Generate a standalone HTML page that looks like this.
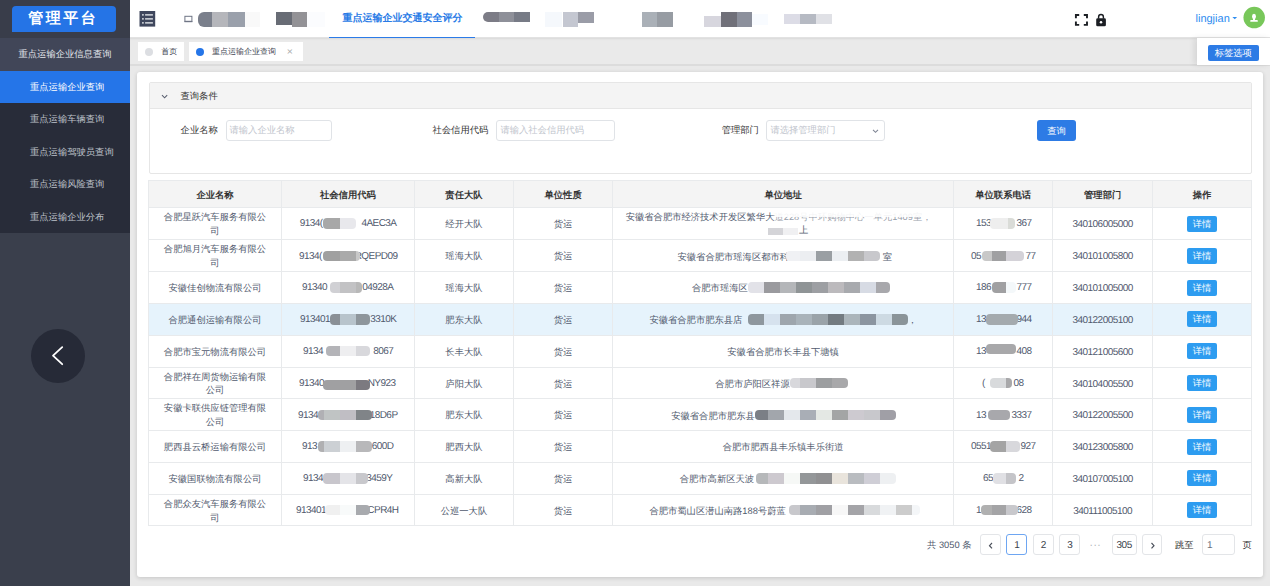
<!DOCTYPE html>
<html><head><meta charset="utf-8">
<style>
*{margin:0;padding:0;box-sizing:border-box}
html,body{text-rendering:geometricPrecision;width:1270px;height:586px;overflow:hidden;background:#e9e9e9;font-family:"Liberation Sans",sans-serif;color:#515a6e}
.abs{position:absolute}
#side{position:absolute;left:0;top:0;width:130px;height:586px;background:#3a3f4c}
#side .top{position:absolute;left:0;top:0;width:130px;height:38px;background:#393d4a}
#logo{position:absolute;left:11.7px;top:5.6px;width:104.5px;height:26px;background:#2574e6;border-radius:4px 4px 4px 0;color:#fff;font-size:15px;font-weight:bold;letter-spacing:2.5px;text-align:left;line-height:25.7px;padding-left:16.5px;white-space:nowrap}
.mi{position:absolute;left:0;width:130px;height:33px;line-height:33px;text-align:center;font-size:9.3px;color:#e6e8ee}
#hdr{position:absolute;left:130px;top:0;width:1140px;height:38px;background:#fff;border-bottom:1px solid #e2e2e2}
#tabs{position:absolute;left:130px;top:38px;width:1140px;height:28.3px;background:#eaeaea;border-bottom:2px solid #dcdcdc;box-shadow:inset 0 2px 2px -1px rgba(0,0,0,.08)}
.tab{position:absolute;white-space:nowrap;top:3.5px;height:19px;background:#fff;font-size:8px;line-height:19px;color:#3d4350}
.dot{position:absolute;top:6.4px;width:8px;height:8px;border-radius:50%}
#card{position:absolute;left:137px;top:71.5px;width:1126px;height:505px;background:#fff;border-radius:3px;box-shadow:0 1px 4px rgba(0,0,0,.16)}
#panel{position:absolute;left:148.5px;top:82px;width:1103.5px;height:91.5px;border:1px solid #e6e6e6;border-radius:2px}
#panel .ph{position:absolute;left:0;top:0;width:100%;height:25.5px;background:#f4f4f4;border-bottom:1px solid #e6e6e6;font-size:9.3px;line-height:26px;color:#333}
.lbl{position:absolute;font-size:9.3px;color:#333;line-height:21px;top:120px}
.inp{position:absolute;top:120px;height:21px;border:1px solid #e0e3e7;border-radius:3px;font-size:9.3px;line-height:19px;color:#c0c4cc;padding-left:3px;background:#fff}
.btn{position:absolute;background:#2d7be5;color:#fff;border-radius:3px;text-align:center}
table{position:absolute;left:148.5px;top:180.5px;border-collapse:collapse;table-layout:fixed;font-size:9.3px}
td,th{border:1px solid #e8eaec;text-align:center;color:#515a6e;font-weight:normal;line-height:12.6px;padding:0 9px}
th{height:27px;background:#f4f4f4;color:#333;font-weight:bold}
td{height:31.9px}
tr.hl td{background:#e6f3fc}
.det{position:relative;top:-1.5px;display:inline-block;width:29.5px;height:16px;line-height:16px;background:#2d9cf0;color:#fff;border-radius:2px;font-size:9.3px;vertical-align:middle}
.hl{height:1px;background:#e8eaec}
.vl{width:1px;background:#e8eaec}
.cell{position:absolute;display:flex;align-items:center;justify-content:center;text-align:center;font-size:9.3px;line-height:13.9px;padding-top:3px;color:#515a6e}
.th{font-weight:bold;color:#333;padding-top:4px}
.num{letter-spacing:-.55px;font-size:10px}
.tx{position:absolute;font-size:9.3px;line-height:12.6px;color:#515a6e;white-space:nowrap}
.bg{position:absolute;overflow:hidden}
.bg i{position:absolute;top:0;height:100%}
.blk{position:absolute}
.pg{position:absolute;top:534px;height:20.5px;border:1px solid #e3e5e8;border-radius:3px;font-size:10px;letter-spacing:-.5px;line-height:21px;text-align:center;color:#3a3f4a;background:#fff}
</style></head><body>
<div id="side">
  <div class="top"></div>
  <div id="logo">管理平台</div>
  <div class="mi" style="top:37.5px;background:#414658;height:33px">重点运输企业信息查询</div>
  <div class="abs" style="left:0;top:70.5px;width:130px;height:162px;background:#282c39"></div>
  <div class="mi" style="top:70.5px;background:#2575e8;height:32.3px;line-height:33px;color:#fff;text-align:left;padding-left:30px">重点运输企业查询</div>
  <div class="mi" style="top:103.3px;height:32.4px;line-height:33px;color:#bfc3cb;text-align:left;padding-left:30px">重点运输车辆查询</div>
  <div class="mi" style="top:135.7px;height:32.4px;line-height:33px;color:#bfc3cb;text-align:left;padding-left:30px">重点运输驾驶员查询</div>
  <div class="mi" style="top:168.1px;height:32.4px;line-height:33px;color:#bfc3cb;text-align:left;padding-left:30px">重点运输风险查询</div>
  <div class="mi" style="top:200.5px;height:32.4px;line-height:33px;color:#bfc3cb;text-align:left;padding-left:30px">重点运输企业分布</div>
  <div class="abs" style="left:31px;top:328.5px;width:54px;height:54px;border-radius:50%;background:#262a37"></div>
  <svg class="abs" style="left:0;top:0" width="130" height="586"><polyline points="62.2,347.2 53,355.7 62.2,364.2" fill="none" stroke="#fff" stroke-width="1.8" stroke-linecap="round" stroke-linejoin="round"/></svg>
</div>

<div id="hdr">
  <svg class="abs" style="left:0;top:0" width="1140" height="38">
    <rect x="9.5" y="11" width="15.7" height="15.6" fill="#3f475d"/>
    <g fill="#c2c6ce">
      <rect x="12" y="14" width="1.8" height="1.7"/><rect x="15.1" y="14" width="7.8" height="1.7"/>
      <rect x="12" y="18" width="1.8" height="1.7"/><rect x="15.1" y="18" width="7.8" height="1.7"/>
      <rect x="12" y="22" width="1.8" height="1.7"/><rect x="15.1" y="22" width="7.8" height="1.7"/>
    </g>
    <rect x="54.9" y="16.3" width="7" height="5" fill="none" stroke="#6f7585" stroke-width="1"/>
    <rect x="54.4" y="21" width="8" height="1.2" fill="#6f7585"/>
  </svg>
<div class="abs" style="left:67.7px;top:11.8px;width:14.3px;height:15.7px;background:#7a7f8b;border-radius:6px 0 0 6px;"></div>
<div class="abs" style="left:82.0px;top:11.8px;width:16.0px;height:15.7px;background:#b5b6bb;"></div>
<div class="abs" style="left:98.0px;top:11.8px;width:16.6px;height:15.7px;background:#9aa0ab;"></div>
<div class="abs" style="left:114.6px;top:11.8px;width:15.4px;height:15.7px;background:#f9f9f9;"></div>
<div class="abs" style="left:146.0px;top:12px;width:16.0px;height:12.5px;background:#686c75;"></div>
<div class="abs" style="left:162.0px;top:12px;width:15.0px;height:15.0px;background:#939296;"></div>
<div class="abs" style="left:177.0px;top:12px;width:18.0px;height:15.0px;background:#fbfcfe;"></div>
<div class="abs" style="left:353.4px;top:11.8px;width:15.3px;height:10.2px;background:#7c7c86;border-radius:6px 0 0 6px;"></div>
<div class="abs" style="left:368.7px;top:12px;width:15.3px;height:9.5px;background:#8e9099;"></div>
<div class="abs" style="left:384.0px;top:12px;width:16.0px;height:9.5px;background:#777b86;"></div>
<div class="abs" style="left:415.0px;top:12px;width:17.0px;height:15.0px;background:#f5f8fc;"></div>
<div class="abs" style="left:432.5px;top:12px;width:15.5px;height:15.0px;background:#c4c7d1;"></div>
<div class="abs" style="left:448.0px;top:12px;width:16.0px;height:10.5px;background:#9a9ca7;"></div>
<div class="abs" style="left:512.0px;top:12px;width:15.0px;height:15.0px;background:#aab0b7;"></div>
<div class="abs" style="left:527.0px;top:12px;width:16.0px;height:15.0px;background:#979ca3;"></div>
<div class="abs" style="left:574.0px;top:16px;width:17.0px;height:11.0px;background:#d7d6de;"></div>
<div class="abs" style="left:591.0px;top:12px;width:16.0px;height:15.0px;background:#707079;"></div>
<div class="abs" style="left:607.0px;top:12px;width:15.0px;height:15.0px;background:#8c909c;"></div>
<div class="abs" style="left:622.0px;top:14px;width:16.0px;height:11.0px;background:#f8fbff;"></div>
<div class="abs" style="left:654.0px;top:14px;width:16.0px;height:10.0px;background:#dcdce6;"></div>
<div class="abs" style="left:670.0px;top:14px;width:16.0px;height:10.0px;background:#b6bac3;"></div>
<div class="abs" style="left:686.0px;top:14px;width:16.0px;height:10.0px;background:#e0e1e6;"></div>
  <div class="abs" style="left:212.5px;top:10px;font-size:10px;font-weight:bold;color:#2a7be6;line-height:18px;white-space:nowrap">重点运输企业交通安全评分</div>
  <div class="abs" style="left:199px;top:36.5px;width:146px;height:1.5px;background:#2b7be8"></div>
  <svg class="abs" style="left:0;top:0" width="1140" height="38">
    <g stroke="#1c1f24" stroke-width="1.9" fill="none" stroke-linecap="butt">
      <path d="M945.9 18.3 V15 H949.2"/><path d="M953.8 15 H957 V18.3"/>
      <path d="M945.9 21.6 V24.9 H949.2"/><path d="M953.8 24.9 H957 V21.6"/>
    </g>
    <path d="M968.6 18.8 V17 A2.4 2.4 0 0 1 973.4 17 V18.8" fill="none" stroke="#1c1f24" stroke-width="1.45"/>
    <rect x="966.2" y="18.3" width="9.7" height="8" rx="1.4" fill="#1c1f24"/>
    <circle cx="971" cy="22.3" r="1.25" fill="#fff"/>
  </svg>
  <div class="abs" style="left:1065.5px;top:10.3px;font-size:11px;color:#2d8cf0;line-height:18px">lingjian</div>
  <svg class="abs" style="left:0;top:0" width="1140" height="38">
    <path d="M1102.4 16.9 H1107.1 L1104.75 19.3 Z" fill="#2d8cf0"/>
    <circle cx="1124.2" cy="17.55" r="10.75" fill="#78c75a"/>
    <ellipse cx="1124" cy="16.4" rx="2" ry="2.6" fill="#fff"/><rect x="1123" y="18" width="2" height="2.5" fill="#fff"/><path d="M1120.3 21.7 V20.6 Q1120.3 20 1121.2 20 H1126.8 Q1127.8 20 1127.8 20.6 V21.7 Z" fill="#fff"/>
  </svg>
</div>
<div id="tabs">
  <div class="tab" style="left:8px;width:46.4px"><div class="dot" style="left:7.2px;background:#dcdee2"></div><span class="abs" style="left:23.3px;top:.8px">首页</span></div>
  <div class="tab" style="left:59px;width:113.8px"><div class="dot" style="left:7.4px;background:#2575e8"></div><span class="abs" style="left:22.9px;top:.8px">重点运输企业查询</span><span class="abs" style="left:97.7px;top:1px;color:#aaa;font-size:10.5px">×</span></div>
  <div class="abs" style="left:1067px;top:0;width:73px;height:26.5px;background:#fff;box-shadow:-3px 0 6px rgba(0,0,0,.09)"></div>
  <div class="btn" style="left:1078px;top:6.6px;width:50.5px;height:16px;font-size:9.3px;line-height:16px;border-radius:2px">标签选项</div>
</div>

<div id="card"></div>
<div id="panel"><div class="ph"><svg class="abs" style="left:11px;top:10.5px" width="8" height="6"><polyline points="1,1.2 3.6,3.8 6.2,1.2" fill="none" stroke="#5a6070" stroke-width="1.1"/></svg><span class="abs" style="left:31px;top:0;font-size:9.3px">查询条件</span></div></div>
<div class="lbl" style="left:180.6px">企业名称</div>
<div class="inp" style="left:225.5px;width:106.3px">请输入企业名称</div>
<div class="lbl" style="left:432.5px">社会信用代码</div>
<div class="inp" style="left:496.4px;width:119.1px">请输入社会信用代码</div>
<div class="lbl" style="left:721.7px">管理部门</div>
<div class="inp" style="left:766.4px;width:118.9px">请选择管理部门<svg class="abs" style="left:105px;top:8px" width="8" height="5"><polyline points="1,0.8 3.5,3.3 6,0.8" fill="none" stroke="#808695" stroke-width="1.1"/></svg></div>
<div class="btn" style="left:1036.7px;top:120.2px;width:39.8px;height:21.3px;font-size:9.3px;line-height:23px">查询</div>
<!--TABLE-->
<div class="abs" style="left:148.7px;top:180.8px;width:1103.0px;height:26.6px;background:#f4f4f4"></div>
<div class="abs" style="left:148.7px;top:303.50px;width:1103.0px;height:31.80px;background:#e6f3fc"></div>
<div class="abs hl" style="left:148.7px;top:180.30px;width:1103.5px"></div>
<div class="abs hl" style="left:148.7px;top:206.90px;width:1103.5px"></div>
<div class="abs hl" style="left:148.7px;top:239.40px;width:1103.5px"></div>
<div class="abs hl" style="left:148.7px;top:271.20px;width:1103.5px"></div>
<div class="abs hl" style="left:148.7px;top:303.00px;width:1103.5px"></div>
<div class="abs hl" style="left:148.7px;top:334.80px;width:1103.5px"></div>
<div class="abs hl" style="left:148.7px;top:366.60px;width:1103.5px"></div>
<div class="abs hl" style="left:148.7px;top:398.40px;width:1103.5px"></div>
<div class="abs hl" style="left:148.7px;top:430.20px;width:1103.5px"></div>
<div class="abs hl" style="left:148.7px;top:461.90px;width:1103.5px"></div>
<div class="abs hl" style="left:148.7px;top:493.70px;width:1103.5px"></div>
<div class="abs hl" style="left:148.7px;top:525.40px;width:1103.5px"></div>
<div class="abs vl" style="left:148.2px;top:180.3px;height:346.1px"></div>
<div class="abs vl" style="left:280.8px;top:180.3px;height:346.1px"></div>
<div class="abs vl" style="left:414.0px;top:180.3px;height:346.1px"></div>
<div class="abs vl" style="left:512.9px;top:180.3px;height:346.1px"></div>
<div class="abs vl" style="left:612.3px;top:180.3px;height:346.1px"></div>
<div class="abs vl" style="left:952.9px;top:180.3px;height:346.1px"></div>
<div class="abs vl" style="left:1052.4px;top:180.3px;height:346.1px"></div>
<div class="abs vl" style="left:1151.9px;top:180.3px;height:346.1px"></div>
<div class="abs vl" style="left:1251.2px;top:180.3px;height:346.1px"></div>
<div class="cell th" style="left:148.7px;top:180.8px;width:132.6px;height:26.6px">企业名称</div>
<div class="cell th" style="left:281.3px;top:180.8px;width:133.2px;height:26.6px">社会信用代码</div>
<div class="cell th" style="left:414.5px;top:180.8px;width:98.9px;height:26.6px">责任大队</div>
<div class="cell th" style="left:513.4px;top:180.8px;width:99.4px;height:26.6px">单位性质</div>
<div class="cell th" style="left:612.8px;top:180.8px;width:340.6px;height:26.6px">单位地址</div>
<div class="cell th" style="left:953.4px;top:180.8px;width:99.5px;height:26.6px">单位联系电话</div>
<div class="cell th" style="left:1052.9px;top:180.8px;width:99.5px;height:26.6px">管理部门</div>
<div class="cell th" style="left:1152.4px;top:180.8px;width:99.3px;height:26.6px">操作</div>
<div class="cell td" style="left:148.7px;top:207.40px;width:132.6px;height:32.50px">合肥星跃汽车服务有限公<br>司</div>
<div class="cell td" style="left:414.5px;top:207.40px;width:98.9px;height:32.50px">经开大队</div>
<div class="cell td" style="left:513.4px;top:207.40px;width:99.4px;height:32.50px">货运</div>
<div class="cell td" style="left:1052.9px;top:207.40px;width:99.5px;height:32.50px"><span class="num">340106005000</span></div>
<div class="cell td" style="left:1152.4px;top:207.40px;width:99.3px;height:32.50px"><span class="det">详情</span></div>
<div class="cell td" style="left:148.7px;top:239.90px;width:132.6px;height:31.80px">合肥旭月汽车服务有限公<br>司</div>
<div class="cell td" style="left:414.5px;top:239.90px;width:98.9px;height:31.80px">瑶海大队</div>
<div class="cell td" style="left:513.4px;top:239.90px;width:99.4px;height:31.80px">货运</div>
<div class="cell td" style="left:1052.9px;top:239.90px;width:99.5px;height:31.80px"><span class="num">340101005800</span></div>
<div class="cell td" style="left:1152.4px;top:239.90px;width:99.3px;height:31.80px"><span class="det">详情</span></div>
<div class="cell td" style="left:148.7px;top:271.70px;width:132.6px;height:31.80px">安徽佳创物流有限公司</div>
<div class="cell td" style="left:414.5px;top:271.70px;width:98.9px;height:31.80px">瑶海大队</div>
<div class="cell td" style="left:513.4px;top:271.70px;width:99.4px;height:31.80px">货运</div>
<div class="cell td" style="left:1052.9px;top:271.70px;width:99.5px;height:31.80px"><span class="num">340101005000</span></div>
<div class="cell td" style="left:1152.4px;top:271.70px;width:99.3px;height:31.80px"><span class="det">详情</span></div>
<div class="cell td" style="left:148.7px;top:303.50px;width:132.6px;height:31.80px">合肥通创运输有限公司</div>
<div class="cell td" style="left:414.5px;top:303.50px;width:98.9px;height:31.80px">肥东大队</div>
<div class="cell td" style="left:513.4px;top:303.50px;width:99.4px;height:31.80px">货运</div>
<div class="cell td" style="left:1052.9px;top:303.50px;width:99.5px;height:31.80px"><span class="num">340122005100</span></div>
<div class="cell td" style="left:1152.4px;top:303.50px;width:99.3px;height:31.80px"><span class="det">详情</span></div>
<div class="cell td" style="left:148.7px;top:335.30px;width:132.6px;height:31.80px">合肥市宝元物流有限公司</div>
<div class="cell td" style="left:414.5px;top:335.30px;width:98.9px;height:31.80px">长丰大队</div>
<div class="cell td" style="left:513.4px;top:335.30px;width:99.4px;height:31.80px">货运</div>
<div class="cell td" style="left:1052.9px;top:335.30px;width:99.5px;height:31.80px"><span class="num">340121005600</span></div>
<div class="cell td" style="left:1152.4px;top:335.30px;width:99.3px;height:31.80px"><span class="det">详情</span></div>
<div class="cell td" style="left:612.8px;top:335.30px;width:340.6px;height:31.80px">安徽省合肥市长丰县下塘镇</div>
<div class="cell td" style="left:148.7px;top:367.10px;width:132.6px;height:31.80px">合肥祥在周货物运输有限<br>公司</div>
<div class="cell td" style="left:414.5px;top:367.10px;width:98.9px;height:31.80px">庐阳大队</div>
<div class="cell td" style="left:513.4px;top:367.10px;width:99.4px;height:31.80px">货运</div>
<div class="cell td" style="left:1052.9px;top:367.10px;width:99.5px;height:31.80px"><span class="num">340104005500</span></div>
<div class="cell td" style="left:1152.4px;top:367.10px;width:99.3px;height:31.80px"><span class="det">详情</span></div>
<div class="cell td" style="left:148.7px;top:398.90px;width:132.6px;height:31.80px">安徽卡联供应链管理有限<br>公司</div>
<div class="cell td" style="left:414.5px;top:398.90px;width:98.9px;height:31.80px">肥东大队</div>
<div class="cell td" style="left:513.4px;top:398.90px;width:99.4px;height:31.80px">货运</div>
<div class="cell td" style="left:1052.9px;top:398.90px;width:99.5px;height:31.80px"><span class="num">340122005500</span></div>
<div class="cell td" style="left:1152.4px;top:398.90px;width:99.3px;height:31.80px"><span class="det">详情</span></div>
<div class="cell td" style="left:148.7px;top:430.70px;width:132.6px;height:31.70px">肥西县云桥运输有限公司</div>
<div class="cell td" style="left:414.5px;top:430.70px;width:98.9px;height:31.70px">肥西大队</div>
<div class="cell td" style="left:513.4px;top:430.70px;width:99.4px;height:31.70px">货运</div>
<div class="cell td" style="left:1052.9px;top:430.70px;width:99.5px;height:31.70px"><span class="num">340123005800</span></div>
<div class="cell td" style="left:1152.4px;top:430.70px;width:99.3px;height:31.70px"><span class="det">详情</span></div>
<div class="cell td" style="left:612.8px;top:430.70px;width:340.6px;height:31.70px">合肥市肥西县丰乐镇丰乐街道</div>
<div class="cell td" style="left:148.7px;top:462.40px;width:132.6px;height:31.80px">安徽国联物流有限公司</div>
<div class="cell td" style="left:414.5px;top:462.40px;width:98.9px;height:31.80px">高新大队</div>
<div class="cell td" style="left:513.4px;top:462.40px;width:99.4px;height:31.80px">货运</div>
<div class="cell td" style="left:1052.9px;top:462.40px;width:99.5px;height:31.80px"><span class="num">340107005100</span></div>
<div class="cell td" style="left:1152.4px;top:462.40px;width:99.3px;height:31.80px"><span class="det">详情</span></div>
<div class="cell td" style="left:148.7px;top:494.20px;width:132.6px;height:31.70px">合肥众友汽车服务有限公<br>司</div>
<div class="cell td" style="left:414.5px;top:494.20px;width:98.9px;height:31.70px">公巡一大队</div>
<div class="cell td" style="left:513.4px;top:494.20px;width:99.4px;height:31.70px">货运</div>
<div class="cell td" style="left:1052.9px;top:494.20px;width:99.5px;height:31.70px"><span class="num">340111005100</span></div>
<div class="cell td" style="left:1152.4px;top:494.20px;width:99.3px;height:31.70px"><span class="det">详情</span></div>
<!--/TABLE-->







<!--BLK-->
<div class="tx" style="letter-spacing:-0.55px;font-size:10px;left:299.8px;top:218.35px">9134(</div>
<div class="tx" style="letter-spacing:-0.55px;font-size:10px;right:873.5px;top:218.35px">4AEC3A</div>
<div class="bg" style="left:323.0px;top:218.40px;width:33.0px;height:10.5px;border-radius:4px"><i style="left:0.0px;width:17.0px;background:#a8a8a8"></i><i style="left:17.0px;width:16.0px;background:#e8e8ec"></i></div>
<div class="tx" style="letter-spacing:-0.55px;font-size:10px;left:299.0px;top:250.50px">9134(</div>
<div class="tx" style="letter-spacing:-0.55px;font-size:10px;right:872.5px;top:250.50px">RQEPD09</div>
<div class="bg" style="left:323.0px;top:250.55px;width:37.0px;height:10.5px;border-radius:4px"><i style="left:0.0px;width:17.0px;background:#a0a0a0"></i><i style="left:17.0px;width:16.0px;background:#aaaaaa"></i><i style="left:33.0px;width:4.0px;background:#c8c8c8"></i></div>
<div class="tx" style="letter-spacing:-0.55px;font-size:10px;left:302.0px;top:282.30px">91340</div>
<div class="tx" style="letter-spacing:-0.55px;font-size:10px;right:876.5px;top:282.30px">04928A</div>
<div class="bg" style="left:330.0px;top:282.35px;width:32.0px;height:10.5px;border-radius:4px"><i style="left:0.0px;width:10.0px;background:#d0d0d4"></i><i style="left:10.0px;width:16.0px;background:#c2c2c4"></i><i style="left:26.0px;width:6.0px;background:#b8b8b8"></i></div>
<div class="tx" style="letter-spacing:-0.55px;font-size:10px;left:300.0px;top:314.10px">913401</div>
<div class="tx" style="letter-spacing:-0.55px;font-size:10px;right:873.5px;top:314.10px">3310K</div>
<div class="bg" style="left:330.0px;top:314.15px;width:40.0px;height:10.5px;border-radius:4px"><i style="left:0.0px;width:10.0px;background:#8a9096"></i><i style="left:10.0px;width:16.0px;background:#b8c4cc"></i><i style="left:26.0px;width:14.0px;background:#8e969c"></i></div>
<div class="tx" style="letter-spacing:-0.55px;font-size:10px;left:303.0px;top:345.90px">9134</div>
<div class="tx" style="letter-spacing:-0.55px;font-size:10px;right:876.8px;top:345.90px">8067</div>
<div class="bg" style="left:326.0px;top:345.95px;width:44.0px;height:10.5px;border-radius:4px"><i style="left:0.0px;width:14.0px;background:#b4b4b8"></i><i style="left:14.0px;width:16.0px;background:#eeeef0"></i><i style="left:30.0px;width:14.0px;background:#d8d8dc"></i></div>
<div class="tx" style="letter-spacing:-0.55px;font-size:10px;left:299.0px;top:377.70px">91340</div>
<div class="tx" style="letter-spacing:-0.55px;font-size:10px;right:874.5px;top:377.70px">NY923</div>
<div class="bg" style="left:323.0px;top:379.75px;width:47.0px;height:10.5px;border-radius:4px"><i style="left:0.0px;width:33.0px;background:#a0a0a2"></i><i style="left:33.0px;width:14.0px;background:#7c7a80"></i></div>
<div class="tx" style="letter-spacing:-0.55px;font-size:10px;left:298.0px;top:409.50px">9134</div>
<div class="tx" style="letter-spacing:-0.55px;font-size:10px;right:872.5px;top:409.50px">18D6P</div>
<div class="bg" style="left:318.0px;top:409.55px;width:54.0px;height:10.5px;border-radius:4px"><i style="left:0.0px;width:6.0px;background:#b0b0b4"></i><i style="left:6.0px;width:16.0px;background:#c0c4c4"></i><i style="left:22.0px;width:16.0px;background:#c0bec4"></i><i style="left:38.0px;width:16.0px;background:#808488"></i></div>
<div class="tx" style="letter-spacing:-0.55px;font-size:10px;left:302.0px;top:441.25px">913</div>
<div class="tx" style="letter-spacing:-0.55px;font-size:10px;right:876.5px;top:441.25px">600D</div>
<div class="bg" style="left:318.0px;top:441.30px;width:54.0px;height:10.5px;border-radius:4px"><i style="left:0.0px;width:6.0px;background:#b0b0b2"></i><i style="left:6.0px;width:16.0px;background:#ccd0d4"></i><i style="left:22.0px;width:16.0px;background:#eef0f2"></i><i style="left:38.0px;width:16.0px;background:#b8b8ba"></i></div>
<div class="tx" style="letter-spacing:-0.55px;font-size:10px;left:303.0px;top:473.00px">9134</div>
<div class="tx" style="letter-spacing:-0.55px;font-size:10px;right:877.5px;top:473.00px">3459Y</div>
<div class="bg" style="left:323.0px;top:473.05px;width:45.0px;height:10.5px;border-radius:4px"><i style="left:0.0px;width:17.0px;background:#c8c6cc"></i><i style="left:17.0px;width:16.0px;background:#e4e4e8"></i><i style="left:33.0px;width:12.0px;background:#c8c8cc"></i></div>
<div class="tx" style="letter-spacing:-0.55px;font-size:10px;left:296.0px;top:504.75px">913401</div>
<div class="tx" style="letter-spacing:-0.55px;font-size:10px;right:871.5px;top:504.75px">CPR4H</div>
<div class="bg" style="left:325.0px;top:504.80px;width:45.0px;height:10.5px;border-radius:4px"><i style="left:0.0px;width:15.0px;background:#f0f0f0"></i><i style="left:15.0px;width:16.0px;background:#f8fafa"></i><i style="left:31.0px;width:14.0px;background:#a8aaae"></i></div>
<div class="tx" style="letter-spacing:-0.55px;font-size:10px;left:976.0px;top:218.35px">153</div>
<div class="tx" style="letter-spacing:-0.55px;font-size:10px;right:238.5px;top:218.35px">367</div>
<div class="bg" style="left:990.0px;top:218.40px;width:25.0px;height:10.5px;border-radius:4px"><i style="left:0.0px;width:18.0px;background:#eeeeee"></i><i style="left:18.0px;width:7.0px;background:#dadcd8"></i></div>
<div class="tx" style="letter-spacing:-0.55px;font-size:10px;left:971.0px;top:250.50px">05</div>
<div class="tx" style="letter-spacing:-0.55px;font-size:10px;right:234.5px;top:250.50px">77</div>
<div class="bg" style="left:982.0px;top:250.55px;width:42.0px;height:10.5px;border-radius:4px"><i style="left:0.0px;width:10.0px;background:#c8c8c8"></i><i style="left:10.0px;width:14.0px;background:#a0a0a2"></i><i style="left:24.0px;width:18.0px;background:#d4d2d8"></i></div>
<div class="tx" style="letter-spacing:-0.55px;font-size:10px;left:976.0px;top:282.30px">186</div>
<div class="tx" style="letter-spacing:-0.55px;font-size:10px;right:238.5px;top:282.30px">777</div>
<div class="bg" style="left:992.0px;top:282.35px;width:24.0px;height:10.5px;border-radius:4px"><i style="left:0.0px;width:14.0px;background:#a0a0a2"></i><i style="left:14.0px;width:10.0px;background:#f4f8fa"></i></div>
<div class="tx" style="letter-spacing:-0.55px;font-size:10px;left:976.0px;top:314.10px">13</div>
<div class="tx" style="letter-spacing:-0.55px;font-size:10px;right:238.5px;top:314.10px">944</div>
<div class="bg" style="left:986.0px;top:314.15px;width:32.0px;height:10.5px;border-radius:4px"><i style="left:0.0px;width:32.0px;background:#a4aaae"></i></div>
<div class="tx" style="letter-spacing:-0.55px;font-size:10px;left:976.0px;top:345.90px">13</div>
<div class="tx" style="letter-spacing:-0.55px;font-size:10px;right:238.5px;top:345.90px">408</div>
<div class="bg" style="left:986.0px;top:343.95px;width:30.0px;height:10.5px;border-radius:4px"><i style="left:0.0px;width:30.0px;background:#a8a8aa"></i></div>
<div class="tx" style="letter-spacing:-0.55px;font-size:10px;left:982.0px;top:377.70px">(</div>
<div class="tx" style="letter-spacing:-0.55px;font-size:10px;right:246.5px;top:377.70px">08</div>
<div class="bg" style="left:990.0px;top:377.75px;width:22.0px;height:10.5px;border-radius:4px"><i style="left:0.0px;width:16.0px;background:#d8dadc"></i><i style="left:16.0px;width:6.0px;background:#a8a8aa"></i></div>
<div class="tx" style="letter-spacing:-0.55px;font-size:10px;left:976.0px;top:409.50px">13</div>
<div class="tx" style="letter-spacing:-0.55px;font-size:10px;right:238.5px;top:409.50px">3337</div>
<div class="bg" style="left:988.0px;top:409.55px;width:22.0px;height:10.5px;border-radius:4px"><i style="left:0.0px;width:22.0px;background:#a8a8ac"></i></div>
<div class="tx" style="letter-spacing:-0.55px;font-size:10px;left:971.0px;top:441.25px">0551</div>
<div class="tx" style="letter-spacing:-0.55px;font-size:10px;right:234.5px;top:441.25px">927</div>
<div class="bg" style="left:990.0px;top:441.30px;width:30.0px;height:10.5px;border-radius:4px"><i style="left:0.0px;width:16.0px;background:#a4a4a4"></i><i style="left:16.0px;width:14.0px;background:#d8d8dc"></i></div>
<div class="tx" style="letter-spacing:-0.55px;font-size:10px;left:983.0px;top:473.00px">65</div>
<div class="tx" style="letter-spacing:-0.55px;font-size:10px;right:246.5px;top:473.00px">2</div>
<div class="bg" style="left:993.0px;top:473.05px;width:23.0px;height:10.5px;border-radius:4px"><i style="left:0.0px;width:13.0px;background:#e0e0e4"></i><i style="left:13.0px;width:10.0px;background:#c4c4c8"></i></div>
<div class="tx" style="letter-spacing:-0.55px;font-size:10px;left:976.0px;top:504.75px">1</div>
<div class="tx" style="letter-spacing:-0.55px;font-size:10px;right:238.5px;top:504.75px">628</div>
<div class="bg" style="left:981.0px;top:504.80px;width:37.0px;height:10.5px;border-radius:4px"><i style="left:0.0px;width:11.0px;background:#b0b0b0"></i><i style="left:11.0px;width:14.0px;background:#a4a4a6"></i><i style="left:25.0px;width:12.0px;background:#c8c8cc"></i></div>
<div class="tx" style="left:625.7px;top:211.05px">安徽省合肥市经济技术开发区繁华大道228号中环购物中心一单元1409室，</div>
<div class="abs" style="left:774.7px;top:210.65px;width:170px;height:6px;background:rgba(255,255,255,.93)"></div>
<div class="abs" style="left:774.7px;top:216.65px;width:170px;height:6px;background:rgba(255,255,255,.4)"></div>
<div class="bg" style="left:768.0px;top:227.60px;width:30.0px;height:7.5px;border-radius:0px"><i style="left:0.0px;width:15.3px;background:#d4d4d8"></i><i style="left:15.3px;width:14.7px;background:#f0f0f2"></i></div>
<div class="tx" style="left:799px;top:223.95px">上</div>
<div class="tx" style="left:677.5px;top:250.50px">安徽省合肥市瑶海区都市科</div>
<div class="tx" style="right:378.0px;top:250.50px">室</div>
<div class="bg" style="left:786.0px;top:250.55px;width:94.0px;height:10.5px;border-radius:4px"><i style="left:0.0px;width:14.0px;background:#f0f1f4"></i><i style="left:14.0px;width:16.0px;background:#eceef1"></i><i style="left:30.0px;width:16.0px;background:#9a9fa3"></i><i style="left:46.0px;width:16.0px;background:#eceff2"></i><i style="left:62.0px;width:16.0px;background:#b2b2b2"></i><i style="left:78.0px;width:16.0px;background:#c8c8cc"></i></div>
<div class="tx" style="left:692.0px;top:282.30px">合肥市瑶海区</div>
<div class="bg" style="left:748.0px;top:282.35px;width:142.0px;height:10.5px;border-radius:4px"><i style="left:0.0px;width:16.0px;background:#e2e2e8"></i><i style="left:16.0px;width:16.0px;background:#9a9a9e"></i><i style="left:32.0px;width:16.0px;background:#b4b6b9"></i><i style="left:48.0px;width:16.0px;background:#8f9496"></i><i style="left:64.0px;width:16.0px;background:#9d9fa3"></i><i style="left:80.0px;width:16.0px;background:#bcbabd"></i><i style="left:96.0px;width:16.0px;background:#a8aaae"></i><i style="left:112.0px;width:16.0px;background:#d7dbe4"></i><i style="left:128.0px;width:14.0px;background:#a8a8ac"></i></div>
<div class="tx" style="left:649.4px;top:314.10px">安徽省合肥市肥东县店</div>
<div class="tx" style="right:353.0px;top:314.10px">，</div>
<div class="bg" style="left:748.0px;top:314.15px;width:160.0px;height:10.5px;border-radius:4px"><i style="left:0.0px;width:16.0px;background:#8e979e"></i><i style="left:16.0px;width:16.0px;background:#d6e2ee"></i><i style="left:32.0px;width:16.0px;background:#9ea6ad"></i><i style="left:48.0px;width:16.0px;background:#a9b3ba"></i><i style="left:64.0px;width:16.0px;background:#9aa3a9"></i><i style="left:80.0px;width:16.0px;background:#737b81"></i><i style="left:96.0px;width:16.0px;background:#abb5bb"></i><i style="left:112.0px;width:16.0px;background:#8b95a0"></i><i style="left:128.0px;width:16.0px;background:#cddae3"></i><i style="left:144.0px;width:16.0px;background:#8a9499"></i></div>
<div class="tx" style="left:715.3px;top:377.70px">合肥市庐阳区祥源</div>
<div class="bg" style="left:790.0px;top:377.75px;width:58.0px;height:10.5px;border-radius:4px"><i style="left:0.0px;width:10.0px;background:#d8d8dc"></i><i style="left:10.0px;width:16.0px;background:#c8c8cc"></i><i style="left:26.0px;width:16.0px;background:#9c9ea0"></i><i style="left:42.0px;width:16.0px;background:#a8a8aa"></i></div>
<div class="tx" style="left:671.2px;top:409.50px">安徽省合肥市肥东县</div>
<div class="bg" style="left:755.0px;top:409.55px;width:141.0px;height:10.5px;border-radius:4px"><i style="left:0.0px;width:13.0px;background:#7b7f86"></i><i style="left:13.0px;width:16.0px;background:#a2a6ac"></i><i style="left:29.0px;width:16.0px;background:#e4e8ec"></i><i style="left:45.0px;width:16.0px;background:#a9aeb6"></i><i style="left:61.0px;width:16.0px;background:#e4e8e4"></i><i style="left:77.0px;width:16.0px;background:#a3a5a5"></i><i style="left:93.0px;width:16.0px;background:#cdcad0"></i><i style="left:109.0px;width:16.0px;background:#c8c8cc"></i><i style="left:125.0px;width:16.0px;background:#a09fa6"></i></div>
<div class="tx" style="left:679.7px;top:473.00px">合肥市高新区天波</div>
<div class="bg" style="left:756.0px;top:473.05px;width:140.0px;height:10.5px;border-radius:4px"><i style="left:0.0px;width:12.0px;background:#b6b8ba"></i><i style="left:12.0px;width:16.0px;background:#cdc9cf"></i><i style="left:28.0px;width:16.0px;background:#f6f8f6"></i><i style="left:44.0px;width:16.0px;background:#949799"></i><i style="left:60.0px;width:16.0px;background:#909092"></i><i style="left:76.0px;width:16.0px;background:#e9e4dc"></i><i style="left:92.0px;width:16.0px;background:#b9bcc0"></i><i style="left:108.0px;width:16.0px;background:#cfced6"></i><i style="left:124.0px;width:16.0px;background:#eef0f2"></i></div>
<div class="tx" style="left:649.4px;top:504.75px">合肥市蜀山区潜山南路188号蔚蓝</div>
<div class="bg" style="left:789.0px;top:504.80px;width:131.0px;height:10.5px;border-radius:4px"><i style="left:0.0px;width:11.0px;background:#c8c8cc"></i><i style="left:11.0px;width:16.0px;background:#a8acb2"></i><i style="left:27.0px;width:16.0px;background:#a0a0a4"></i><i style="left:43.0px;width:16.0px;background:#f7f7f7"></i><i style="left:59.0px;width:16.0px;background:#a4a4a8"></i><i style="left:75.0px;width:16.0px;background:#d8dadc"></i><i style="left:91.0px;width:16.0px;background:#f0f2f4"></i><i style="left:107.0px;width:16.0px;background:#cccccc"></i><i style="left:123.0px;width:8.0px;background:#f4f6f8"></i></div>
<!--/BLK-->






<div class="abs" style="left:927px;top:536.5px;font-size:9.3px;line-height:16px;color:#515a6e;white-space:nowrap">共 3050 条</div>
<div class="pg" style="left:980px;width:20.7px"><svg class="abs" style="left:7px;top:6.5px" width="6" height="8"><polyline points="4,1 1.5,3.7 4,6.4" fill="none" stroke="#4a4f5a" stroke-width="1.15"/></svg></div>
<div class="pg" style="left:1006.4px;width:20.9px;border-color:#6ea6f2;color:#3a3f4a">1</div>
<div class="pg" style="left:1032.7px;width:21px">2</div>
<div class="pg" style="left:1059.4px;width:20.9px">3</div>
<div class="abs" style="left:1089.5px;top:536.5px;font-size:10px;line-height:18.5px;color:#a0a4ab;letter-spacing:.6px">···</div>
<div class="pg" style="left:1111.5px;width:25.3px">305</div>
<div class="pg" style="left:1141.6px;width:20.9px"><svg class="abs" style="left:7.5px;top:6.5px" width="6" height="8"><polyline points="1.5,1 4,3.7 1.5,6.4" fill="none" stroke="#4a4f5a" stroke-width="1.15"/></svg></div>
<div class="abs" style="left:1175px;top:537px;font-size:9.3px;line-height:16px;color:#333">跳至</div>
<div class="pg" style="left:1202px;width:32.5px;text-align:left;padding-left:4px;color:#6a707c">1</div>
<div class="abs" style="left:1242.5px;top:537px;font-size:9.3px;line-height:16px;color:#333">页</div>

</body></html>
